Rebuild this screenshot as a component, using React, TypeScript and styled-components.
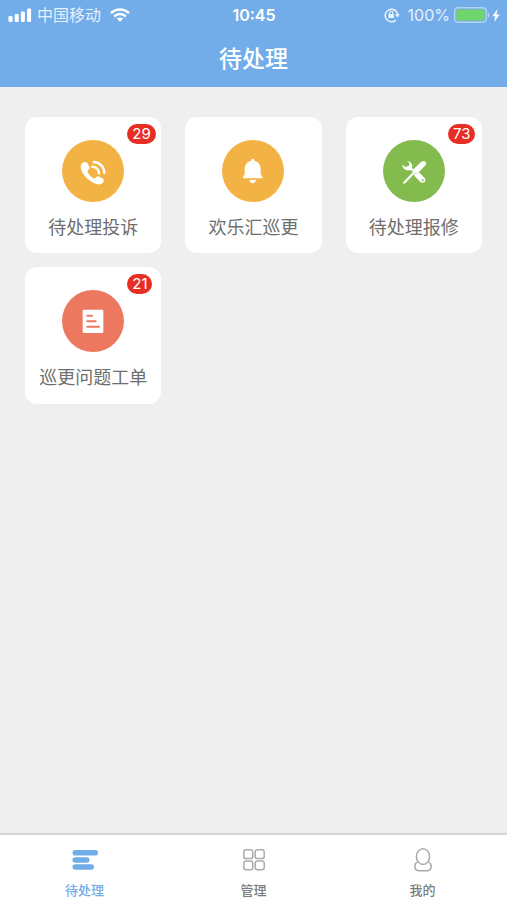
import React from "react";
import styled, { createGlobalStyle } from "styled-components";

const GlobalStyle = createGlobalStyle`
  * { box-sizing: border-box; }
  body {
    margin: 0;
    background: #efefef;
    font-family: "Noto Sans CJK SC", sans-serif;
  }
  button { font: inherit; border: 0; padding: 0; cursor: pointer; }
`;

const Screen = styled.div`
  min-height: 100vh;
  display: flex;
  flex-direction: column;
`;

const Header = styled.header`
  background: #72ace9;
  color: #fff;
  height: 87px;
`;

const StatusBar = styled.div`
  display: grid;
  grid-template-columns: 1fr auto 1fr;
  align-items: center;
  height: 30px;
  padding: 0 7px 0 8px;
  font-family: Inter, "Noto Sans CJK SC", sans-serif;
  font-size: 16px;
  line-height: 30px;
`;

const StatusGroup = styled.div<{ $end?: boolean }>`
  display: flex;
  align-items: center;
  justify-content: ${(p) => (p.$end ? "flex-end" : "flex-start")};
  svg { display: block; flex: none; }
`;

const Carrier = styled.span`
  margin: 0 9px 0 5px;
  color: #e6f1fd;
`;

const Clock = styled.time`
  font-weight: 600;
`;

const Charge = styled.span`
  margin: 0 4px 0 8px;
  color: #e6f1fd;
`;

const Title = styled.h1`
  margin: 0;
  text-align: center;
  font-size: 23px;
  font-weight: 500;
  line-height: 54px;
`;

const Grid = styled.main`
  flex: 1;
  display: grid;
  grid-template-columns: repeat(3, 1fr);
  align-content: start;
  gap: 14px 24px;
  padding: 30px 25px;
`;

const Card = styled.button`
  position: relative;
  display: flex;
  flex-direction: column;
  align-items: center;
  aspect-ratio: 1;
  padding-top: 23px;
  background: #fff;
  border-radius: 12px;
`;

const Disc = styled.span<{ $color: string }>`
  width: 62px;
  height: 62px;
  border-radius: 50%;
  background: ${(p) => p.$color};
  svg { display: block; width: 100%; height: 100%; }
`;

const CardLabel = styled.span`
  margin-top: 10px;
  color: #6e6e6e;
  font-size: 18px;
  line-height: 28px;
  white-space: nowrap;
`;

const Badge = styled.span`
  position: absolute;
  top: 7px;
  left: 75%;
  padding: 0 5px;
  border-radius: 10px;
  background: #e62e24;
  color: #fff;
  font-family: Inter, sans-serif;
  font-size: 15px;
  line-height: 20px;
`;

const TabBar = styled.nav`
  display: flex;
  height: 67px;
  background: #fff;
  border-top: 2px solid #d6d6d6;
`;

const Tab = styled.button<{ $active?: boolean }>`
  flex: 1;
  display: flex;
  flex-direction: column;
  align-items: center;
  gap: 8px;
  padding-top: 13px;
  background: none;
  color: ${(p) => (p.$active ? "#72ace9" : "#7c7c7c")};
  font-size: 13px;
  font-weight: 500;
  line-height: 20px;
`;

const TabIcon = styled.span`
  display: grid;
  place-items: center;
  height: 24px;
  svg { display: block; }
`;

const SignalIcon = () => (
  <svg width="24" height="14" viewBox="0 0 24 14" fill="#fff" aria-hidden="true">
    <rect x="0.5" y="8" width="4" height="6" rx="1.2" />
    <rect x="6.7" y="6" width="4" height="8" rx="1.2" />
    <rect x="12.9" y="3.4" width="4" height="10.6" rx="1.2" />
    <rect x="19.1" y="0.6" width="4" height="13.4" rx="1.2" />
  </svg>
);

const WifiIcon = () => (
  <svg width="20" height="14" viewBox="0 0 20 14" fill="none" stroke="#fff" strokeWidth="2.5" aria-hidden="true">
    <path d="M1 5.2C6.1.2 13.9.2 19 5.2" />
    <path d="M4.2 8.5c3.3-3.2 8.3-3.2 11.6 0" />
    <path d="M6.8 10.6c1.9-1.6 4.5-1.6 6.4 0L10 13.8z" fill="#fff" stroke="none" />
  </svg>
);

const RotationLockIcon = () => (
  <svg width="16" height="16" viewBox="0 0 16 16" fill="none" stroke="#eef6ff" strokeWidth="1.5" aria-hidden="true">
    <path d="M11.8 13.1A6.3 6.3 0 1 1 13.7 7.4" />
    <path d="M10.9 7.2h5L13.4 10.6z" fill="#eef6ff" stroke="none" />
    <rect x="4.5" y="7" width="5.4" height="4" rx="0.6" fill="#eef6ff" stroke="none" />
    <path d="M5.6 7.4V5.9a1.6 1.6 0 0 1 3.2 0v1.5" strokeWidth="1.1" />
  </svg>
);

const BatteryIcon = () => (
  <svg width="38" height="16" viewBox="0 0 38 16" aria-hidden="true">
    <rect x="0.7" y="0.7" width="31.6" height="14.6" rx="3.5" fill="none" stroke="#b5d4f5" strokeWidth="1.4" />
    <rect x="2.4" y="2.4" width="28.2" height="11.2" rx="1.8" fill="#70d56c" />
    <path d="M33.8 5.4c2.2.8 2.2 4.4 0 5.2z" fill="#b5d4f5" />
  </svg>
);

const BoltIcon = () => (
  <svg width="8" height="13" viewBox="0 0 8 13" fill="#fff" aria-hidden="true">
    <path d="M5.6 0 .3 7.2h3L2.2 13 7.7 5.6H4.5z" />
  </svg>
);

const PhoneIcon = () => (
  <svg viewBox="142 105 186 186" fill="none" aria-hidden="true">
    <path
      fill="#fff"
      d="M202 175c5-5 13-5 17 1l4 8c3 6 0 9-3 12-2 3-1 6 2 10 5 7 11 12 18 15 4-6 9-9 14-6l9 5c6 4 5 10 1 14-6 6-16 5-27 0-16-8-31-22-37-38-3-9-2-17 2-21z"
    />
    <path d="M232 185c12 0 21 9 21 20M237 171c19 1 32 15 32 33" stroke="#fff" strokeWidth="7" strokeLinecap="round" />
  </svg>
);

const BellIcon = () => (
  <svg viewBox="130 104 186 186" fill="#fff" aria-hidden="true">
    <path d="M217 166c0-8 10-8 10 0 12 3 19 12 19 24v15c0 4 6 8 6 14h-60c0-6 6-10 6-14v-15c0-12 7-21 19-24z" />
    <path d="M212 224h20c-2 13-18 13-20 0z" />
  </svg>
);

const ToolsIcon = () => (
  <svg viewBox="131 104 186 186" aria-hidden="true">
    <path
      fill="#fff"
      d="M203 168c11-1 18 9 15 20l12 11 8 1 18 18c5 6 2 14-6 14-3 0-6-1-8-3l-17-18-1-8-11-9c-12 4-23-3-24-16l10 7 10-4 1-8z"
    />
    <circle cx="250" cy="225" r="3" fill="#83bb4e" />
    <path
      d="M246 169c3-3 9-3 12 0s3 8 1 10l-25 26-8-1-28 30-8 1 2-5 29-30v-7z"
      fill="#fff"
      stroke="#83bb4e"
      strokeWidth="2.5"
      paintOrder="stroke"
    />
  </svg>
);

const DocumentIcon = () => (
  <svg viewBox="143 88 186 186" aria-hidden="true">
    <rect x="205" y="147" width="62" height="70" rx="4" fill="#fff" />
    <path d="M219 165h14M219 182h25M219 198h35" stroke="#ec795f" strokeWidth="6" strokeLinecap="round" />
  </svg>
);

const PendingIcon = () => (
  <svg width="26" height="22" viewBox="0 0 26 22" fill="#72ace9" aria-hidden="true">
    <rect x="0.5" y="1" width="25.5" height="5.6" rx="2.8" />
    <rect x="0.5" y="8.2" width="17" height="5.6" rx="2.8" />
    <rect x="0.5" y="15.2" width="21.5" height="5.6" rx="2.8" />
  </svg>
);

const ManageIcon = () => (
  <svg width="22" height="22" viewBox="0 0 22 22" fill="none" stroke="#ababab" strokeWidth="1.5" aria-hidden="true">
    <rect x="0.8" y="0.8" width="9" height="8.8" rx="2.2" />
    <rect x="12.2" y="0.8" width="9" height="8.8" rx="2.2" />
    <rect x="0.8" y="12" width="9" height="8.8" rx="2.2" />
    <rect x="12.2" y="12" width="9" height="8.8" rx="2.2" />
  </svg>
);

const PersonIcon = () => (
  <svg width="18" height="24" viewBox="0 0 18 24" fill="none" stroke="#ababab" strokeWidth="1.5" aria-hidden="true">
    <ellipse cx="9" cy="8.6" rx="6.6" ry="7.8" />
    <path d="M3.6 13.8C1.4 15 .8 16.5.8 18.3c0 3 2 4.5 4.8 4.5h6.8c2.8 0 4.8-1.5 4.8-4.5 0-1.8-.6-3.3-2.8-4.5" />
  </svg>
);

const tasks = [
  { label: "待处理投诉", color: "#f3b344", count: 29, icon: <PhoneIcon /> },
  { label: "欢乐汇巡更", color: "#f3b344", icon: <BellIcon /> },
  { label: "待处理报修", color: "#83bb4e", count: 73, icon: <ToolsIcon /> },
  { label: "巡更问题工单", color: "#ec795f", count: 21, icon: <DocumentIcon /> },
];

const tabs = [
  { label: "待处理", icon: <PendingIcon />, active: true },
  { label: "管理", icon: <ManageIcon /> },
  { label: "我的", icon: <PersonIcon /> },
];

export default function App() {
  return (
    <Screen>
      <GlobalStyle />
      <Header>
        <StatusBar>
          <StatusGroup>
            <SignalIcon />
            <Carrier>中国移动</Carrier>
            <WifiIcon />
          </StatusGroup>
          <Clock>10:45</Clock>
          <StatusGroup $end>
            <RotationLockIcon />
            <Charge>100%</Charge>
            <BatteryIcon />
            <BoltIcon />
          </StatusGroup>
        </StatusBar>
        <Title>待处理</Title>
      </Header>
      <Grid>
        {tasks.map((task) => (
          <Card key={task.label} type="button">
            <Disc $color={task.color}>{task.icon}</Disc>
            <CardLabel>{task.label}</CardLabel>
            {task.count !== undefined && <Badge>{task.count}</Badge>}
          </Card>
        ))}
      </Grid>
      <TabBar>
        {tabs.map((tab) => (
          <Tab key={tab.label} type="button" $active={tab.active} aria-current={tab.active ? "page" : undefined}>
            <TabIcon>{tab.icon}</TabIcon>
            {tab.label}
          </Tab>
        ))}
      </TabBar>
    </Screen>
  );
}
